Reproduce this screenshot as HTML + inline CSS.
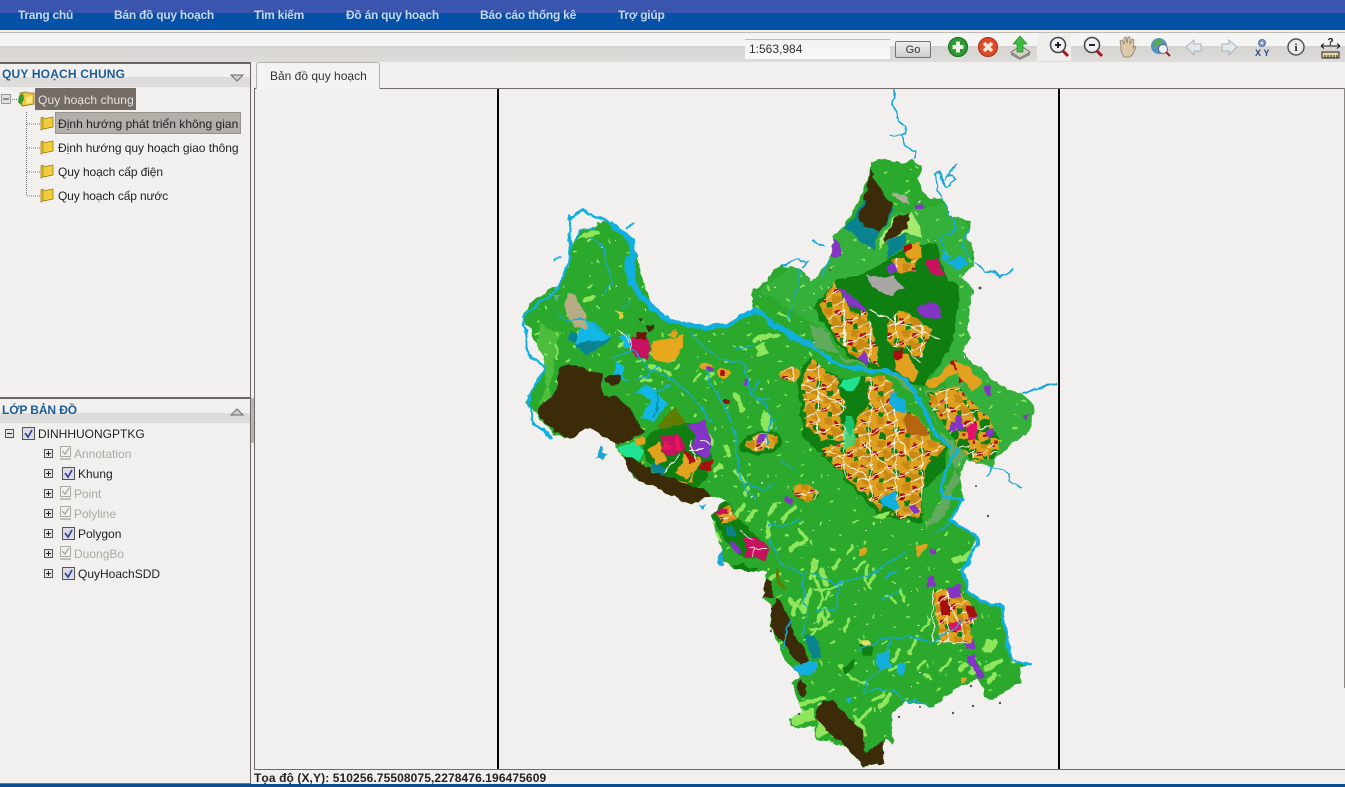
<!DOCTYPE html>
<html lang="vi"><head><meta charset="utf-8"><title>Bản đồ quy hoạch</title>
<style>
html,body{margin:0;padding:0;width:1345px;height:787px;overflow:hidden;background:#f1f0ee;font-family:"Liberation Sans",sans-serif}
.a{position:absolute;white-space:nowrap}
.r{position:absolute}
.nav{top:8px;color:#c9d6ea;font-size:12px;font-weight:bold;letter-spacing:-.25px;line-height:14px}
.t{font-size:12px;line-height:14px;color:#222;letter-spacing:.03px}
.l{font-size:12px;line-height:14px;color:#222}
.g{color:#aaa9a0}
.h{font-size:12px;font-weight:bold;color:#1c5c98;letter-spacing:.18px;line-height:14px}
svg{position:absolute;left:0;top:0}
</style></head><body>
<div class="r" style="left:0;top:0;width:1345px;height:13px;background:#3a55ae"></div>
<div class="r" style="left:0;top:13px;width:1345px;height:17px;background:#0551a8"></div>
<div class="r" style="left:0;top:32px;width:1345px;height:1px;background:#bdbcb9"></div>
<div class="r" style="left:0;top:33px;width:1345px;height:13px;background:#f4f4f2"></div>
<div class="r" style="left:0;top:46px;width:1345px;height:16px;background:linear-gradient(#d6d4d1,#dedcd9)"></div>
<div class="r" style="left:1037px;top:33px;width:34px;height:28px;background:#efeeec"></div>
<div class="a nav" style="left:18px">Trang chủ</div>
<div class="a nav" style="left:114px">Bản đồ quy hoạch</div>
<div class="a nav" style="left:254px">Tìm kiếm</div>
<div class="a nav" style="left:346px">Đồ án quy hoạch</div>
<div class="a nav" style="left:480px">Báo cáo thống kê</div>
<div class="a nav" style="left:618px">Trợ giúp</div>

<div class="r" style="left:745px;top:39px;width:145px;height:20px;background:linear-gradient(#f3f2f0,#faf9f8);border-top:1px solid #bbb;box-sizing:border-box"></div>
<div class="a" style="left:749px;top:42px;font-size:12px;line-height:15px;color:#333">1:563,984</div>
<div class="r" style="left:895px;top:41px;width:36px;height:17px;box-sizing:border-box;border:1px solid #77746f;border-radius:2px;background:linear-gradient(#f0efed,#cfcdca);font-size:11px;line-height:16px;text-align:center;color:#333">Go</div>

<!-- panels -->
<div class="r" style="left:0;top:62px;width:250px;height:2px;background:#6c6663"></div>
<div class="r" style="left:250px;top:62px;width:1px;height:722px;background:#6c6663"></div>
<div class="r" style="left:0;top:77px;width:250px;height:10px;background:#dedcda"></div>
<div class="a h" style="left:2px;top:67px">QUY HOẠCH CHUNG</div>
<div class="r" style="left:0;top:397px;width:250px;height:2px;background:#6c6663"></div>
<div class="r" style="left:0;top:413px;width:250px;height:10px;background:#dedcda"></div>
<div class="a h" style="left:2px;top:403px;letter-spacing:-.1px">LỚP BẢN ĐỒ</div>
<div class="r" style="left:251px;top:398px;width:3px;height:45px;background:#b9b7b4"></div>
<div class="r" style="left:0;top:783px;width:250px;height:1px;background:#77736f"></div>

<div class="r" style="left:35px;top:88px;width:101px;height:22px;background:#756c67"></div>
<div class="r" style="left:55px;top:112px;width:186px;height:22px;box-sizing:border-box;border:1px solid #98928d;background:#b3aeaa"></div>
<div class="a t" style="left:38px;top:93px;color:#e6e3df;letter-spacing:.12px">Quy hoạch chung</div>
<div class="a t" style="left:58px;top:117px">Định hướng phát triển không gian</div>
<div class="a t" style="left:58px;top:141px;letter-spacing:-.05px">Định hướng quy hoạch giao thông</div>
<div class="a t" style="left:58px;top:165px;letter-spacing:-.1px">Quy hoạch cấp điện</div>
<div class="a t" style="left:58px;top:189px;letter-spacing:-.15px">Quy hoạch cấp nước</div>

<div class="a l" style="left:38px;top:427px">DINHHUONGPTKG</div>
<div class="a l g" style="left:74px;top:447px">Annotation</div>
<div class="a l" style="left:78px;top:467px">Khung</div>
<div class="a l g" style="left:74px;top:487px">Point</div>
<div class="a l g" style="left:74px;top:507px">Polyline</div>
<div class="a l" style="left:78px;top:527px">Polygon</div>
<div class="a l g" style="left:74px;top:547px">DuongBo</div>
<div class="a l" style="left:78px;top:567px">QuyHoachSDD</div>

<!-- tab -->
<div class="r" style="left:256px;top:62px;width:124px;height:27px;box-sizing:border-box;border:1px solid #b5b2ae;border-bottom:none;border-radius:3px 3px 0 0;background:#f4f3f1;z-index:2"></div>
<div class="a" style="left:270px;top:69px;font-size:12px;line-height:14px;color:#333;z-index:3">Bản đồ quy hoạch</div>

<svg width="1345" height="787" viewBox="0 0 1345 787" xmlns="http://www.w3.org/2000/svg">
<defs>
<filter id="rough" filterUnits="userSpaceOnUse" x="500" y="88" width="558" height="681" color-interpolation-filters="sRGB">
<feTurbulence type="fractalNoise" baseFrequency="0.09" numOctaves="3" seed="7" result="n"/>
<feDisplacementMap in="SourceGraphic" in2="n" scale="7" xChannelSelector="R" yChannelSelector="G"/>
</filter>
<pattern id="tick" width="53" height="47" patternUnits="userSpaceOnUse">
<path d="M5 6l4-2M26 4l1 4M44 17l3 1M15 24l2 3M35 33l4-2M6 41l2-1" stroke="#8fe65c" stroke-width="1.6" fill="none"/>
<path d="M18 13h2M33 5h1M9 28h1" stroke="#f4f4f0" stroke-width="1"/>
</pattern>
<pattern id="city" width="26" height="22" patternUnits="userSpaceOnUse">
<rect width="26" height="22" fill="#dea01e"/>
<path d="M0 17L12 22V14L0 9zM18 0h8v7h-6z" fill="#c98914"/>
<path d="M3 3h5v4H3zM15 11h5v5h-5z" fill="#a81010"/>
<path d="M9 8h5v5H9zM21 16h5v5h-5z" fill="#0f7f12"/>
<path d="M0 8L14 2M12 0v22M0 20L26 10" stroke="#f3f0df" stroke-width="1" fill="none"/>
</pattern>
<pattern id="city2" width="22" height="20" patternUnits="userSpaceOnUse">
<rect width="22" height="20" fill="#0f7f12"/>
<path d="M0 0h12v9H0zM11 11h11v9H11z" fill="#e0a020"/>
<path d="M4 2h4v3H4zM15 13h4v3h-4z" fill="#a81010"/>
<path d="M0 14L22 5" stroke="#f3f0df" stroke-width="1"/>
</pattern>
<clipPath id="land"><path d="M872 162L880 158 893 160 903 164 913 160 922 165 918 177 922 190 928 198 943 200 952 215 962 217 972 223 967 237 975 257 973 267 962 277 973 290 967 327 970 337 963 353 990 377 1007 390 1023 392 1035 410 1028 433 1012 443 997 457 993 467 967 460 958 477 963 500 950 520 977 537 973 550 963 570 967 590 980 602 1002 607 1005 633 1013 663 1030 662 1020 668 1020 682 993 700 983 697 983 690 977 680 953 690 933 707 907 702 893 713 892 727 893 742 885 740 882 763 862 767 847 747 817 740 815 727 790 727 790 718 803 713 797 697 792 682 800 677 785 660 772 627 772 607 763 597 765 578 772 565 768 573 733 570 723 560 712 513 727 500 713 495 690 505 657 487 633 477 622 457 617 447 592 428 570 438 553 435 538 417 528 403 530 393 545 367 543 357 530 330 522 317 530 303 560 283 570 260 571 243 580 232 592 227 598 222 613 223 633 240 637 260 650 303 667 320 700 328 727 325 753 310 752 290 767 282 773 268 793 267 805 272 812 282 822 270 830 258 835 233 843 227 853 210 868 180z"/></clipPath>
</defs>

<!-- map frame -->
<rect x="254" y="88" width="1091" height="681" fill="#f1f0ee"/>
<path d="M254.5 769V88.5H1345M254 769.5H1345" fill="none" stroke="#6f6a67"/>
<path d="M1344.5 88V688" stroke="#8a8683"/>

<g filter="url(#rough)">
<!-- streams outside land -->
<g fill="none" stroke="#1ba6d6" stroke-width="1.6">
<path d="M895 90L894 98 891 104 897 112 899 122 905 124 906 132 901 136 889 135M901 136L905 145 911 149 916 151 916 160"/>
<path d="M956 165L950 172 946 178 952 175 956 180 946 187 940 172 936 175 938 190 942 200"/>
<path d="M975 262L985 270 994 272 1000 277 1009 274 1013 268"/>
<path d="M813 240L818 244 825 246M780 268L795 260 808 262 802 267"/>
<path d="M1024 392L1040 388 1058 384" stroke-width="2"/>
<path d="M985 462L992 468 1003 470 1012 482 1022 488M992 468L987 476"/>
</g>
<g fill="#1ba6d6"><path d="M601 445l4 3-3 6 5 1-4 6-5-4-3 2 3-6zM698 505l7 0-3 5zM722 546l3 8-3 12-4-3 2-10z"/></g>

<!-- land -->
<rect x="500" y="150" width="558" height="630" fill="#2aa92c" clip-path="url(#land)"/>
<g clip-path="url(#land)">
<path d="M835 225L960 200 980 290 965 350 1040 400 1030 440 990 470 960 470 945 380 840 340 760 290 800 260z" fill="#35b03a"/>
<rect x="520" y="150" width="520" height="620" fill="url(#tick)"/>

<!-- pale green patches -->
<g fill="none" stroke="#8fe65c" stroke-linecap="round">
<path d="M810 590L803 610M815 560l-4 18M820 570l6 14M770 580l8 -6" stroke-width="5"/>
<path d="M790 600l10 8M800 600l-8 14M817 622l6 -12M822 612l4 12M840 560l-6 8" stroke-width="4"/>
<path d="M815 575l8 25-5 8M815 590q18 0 26-6M847 555l6-8M857 570l8-10" stroke-width="2.500"/>
<path d="M810 630l22-8M826 600l3-8M827 622q5-8 -2-14M815 628l-5 14" stroke-width="2.500"/>
<path d="M868 565l-3 14 6 8M870 585l5-10M890 596l6 6M900 590l4 10" stroke-width="3"/>
<path d="M880 660l8-8M900 650l-6 10M915 640l-5 14M930 620l-8 10M925 660l-8 8M890 670l12-6M930 680l-6-6M950 660l-8 10" stroke-width="3"/>
<path d="M840 665l14 14 14 5M860 640l5 8M848 620l-3 12" stroke-width="2.500"/>
<path d="M985 650l5-10M995 640l-6 10M985 670l15-8M990 680l4-6M975 660l-4 12M960 670l6-6" stroke-width="5"/>
<path d="M790 685l10 24M800 705l25 -8M820 705l5 14M870 710l-14 14M865 735l-10-18M890 695l-10 12M873 700l10-6" stroke-width="4"/>
<path d="M985 525l8 14M955 560l15-4M975 552l-8 6" stroke-width="6"/>
<path d="M585 300l8-3M710 375l-3 4M755 340l16-5M770 335l8 2" stroke-width="5"/>
<path d="M735 395l8 14M650 365l10 5M620 345l10-3M575 335l12 -5M570 380l-4-5M705 430l8 14M725 445l4 10M735 470l8 10M745 505l-8 10M755 510l-8 10M745 495l4-8M715 470l6-4M775 505l-5 10M782 520l12 -12M800 530l5 10M790 550l12 -8M770 525l-3 12" stroke-width="4.500"/>
<path d="M555 345l3 12M600 345l-12 -8M565 398l8 6M665 370l5 5M635 362l10-2M650 380l-10 -3M675 370l4 -5M695 380l4-6M740 345l6 5M790 320l-10 -5" stroke-width="2.500"/>
</g>
<path d="M540 322l-3 22 10 40-7 18 8 14 12 12-10-40 10-55z" fill="#8fe65c" opacity=".35"/>
<path d="M576 240l18-12 8 6-14 4z" fill="#8fe65c"/>
<path d="M762 410l7 3 3 15-7 6-4-10zM748 400l8-4M755 348l10-5 3 10-8 3z" fill="#8fe65c"/>
<path d="M770 720l-5-5M792 712l22-4 0 12-22 6zM816 718l16 14-14 6z" fill="#8fe65c"/>

<!-- teal/cyan west -->
<path d="M587 322L613 337 597 350 587 355 575 343 577 335z" fill="#12b7e6"/>
<path d="M588 342L613 338 597 350 587 355 575 345z" fill="#0a8390"/>
<path d="M571 330l6 3-2 10-7-4z" fill="#0a8390"/>
<path d="M647 383L667 403 653 423 642 417 650 400 635 392z" fill="#12b7e6"/>
<path d="M656 392l3 14-6 12" stroke="#0b8ea5" fill="none" stroke-width="1.5"/>
<path d="M617 360l8 8-3 8 10 5-18-6zM620 337l6 12 6-3-6-13z" fill="#12b7e6"/>
<path d="M657 427L675 407 685 423 665 430z" fill="#5f7d00"/>
<path d="M574 295l12 20 1 14-12-2-9-15 0-18z" fill="#b7ad84"/>
<path d="M553 295l8 0-5 6z" fill="#5fae8c"/>

<!-- West city -->
<path d="M653 430L687 423 707 423 712 453 707 477 697 487 677 487 647 463 643 443z" fill="#0f7f12"/>
<path d="M687 426L707 420 712 453 707 458 690 450 695 435z" fill="#8535c6"/>
<path d="M660 438l18-4 10 16-22 6z" fill="#c6125f"/>
<path d="M660 450l5-8 8 6zM672 440l4 -4 8 14-6 2z" fill="#e7165f"/>
<path d="M648 450l12-8 7 20-10 3zM686 455l14 2-3 14-10 8-12 -6zM665 480l18 6 10 3 -6-5 10-14-4 12z" fill="#e2a11e"/>
<path d="M700 462l12-2-2 12-10 0z" fill="#a81010"/>
<path d="M685 450l12 8-8 5z" fill="#a81010"/>
<path d="M680 455l-18 18M690 440l5 20M700 440l10 5M690 450l15 0" stroke="#f0f0e0" fill="none"/>
<path d="M653 462l12 6-4 8-12-8z" fill="#0a8390"/>
<!-- mint -->
<path d="M617 447L633 442 645 450 640 462 623 455z" fill="#1fe391"/>
<path d="M633 440l10-4 3 8-10 2z" fill="#e2a11e"/>

<!-- SW cluster -->
<path d="M712 513L727 500 737 517 768 547 767 560 740 557 727 543z" fill="#0f7f12"/>
<path d="M715 512l14-6 8 12-14 6z" fill="url(#city)"/>
<path d="M713 512l10-4 4 5-8 2z" fill="#c6125f"/>
<path d="M745 538l10-2 13 10-1 14-22-4z" fill="#c6125f"/>
<path d="M728 540l8 3 6 13-10-4z" fill="#8535c6"/>
<path d="M726 525l7 0 2 12-8-2z" fill="#0a8390"/>
<path d="M710 520l6 10 8 12-12-4z" fill="#8fe65c"/>
<path d="M733 565l12-2 0 8-12 2zM758 568l-5 7-12-2 3-8z" fill="#0f7f12"/>
<path d="M748 548l18 0M750 557l6-9M738 530l14 10" stroke="#f0f0e0" fill="none"/>

<!-- small town clusters -->
<ellipse cx="761" cy="443" rx="22" ry="11" transform="rotate(-14 761 443)" fill="#0f7f12"/>
<ellipse cx="762" cy="442" rx="17" ry="8" transform="rotate(-14 762 442)" fill="url(#city)"/>
<path d="M758 436l10-2-3 8-8 1z" fill="#8535c6"/>
<ellipse cx="806" cy="493" rx="14" ry="8" transform="rotate(20 806 493)" fill="url(#city)"/>
<path d="M786 496l7 4-2 4-7-4z" fill="#8535c6"/>
<ellipse cx="790" cy="374" rx="9" ry="7" fill="url(#city)"/>
<ellipse cx="723" cy="373" rx="8" ry="5" fill="#e2a11e"/>
<path d="M720 370l5 0 0 6-5 0z" fill="#a81010"/>
<ellipse cx="706" cy="367" rx="7" ry="3" fill="#e2a11e"/>
<path d="M707 367l5 0 0 4-5 0zM744 380l4 0 0 6-4 0z" fill="#8535c6"/>
<ellipse cx="726" cy="402" rx="3.5" ry="3" fill="#8b1010"/>
<path d="M672 329l6 3-2 5-6-2z" fill="#e2a11e"/>
<path d="M652 340l32-4 1 10-10 14-8 3-14-6z" fill="#e8a81e"/>
<path d="M632 337l14 0 6 12-3 10-14-3-6-12z" fill="#c6125f"/>
<path d="M637 332h9v8h-9z" fill="#6b1606"/>
<path d="M637 318l6 0-4 4zM646 326l8-2 1 5-8 2z" fill="#3a2a08"/>
<path d="M618 330q8 5 10 14M628 335l4 16" stroke="#f0f0e0" fill="none"/>
<path d="M615 311l4 0 3 8-4 0z" fill="#e2d040"/>

<!-- teal north / south (below the brown) -->
<g fill="#0a8390">
<path d="M843 227L858 215 866 228 880 232 885 203 893 210 888 222 880 233 872 250 858 237z"/>
<path d="M887 243L893 237 908 233 903 247 887 260z"/>
<path d="M805 635l10 0 6 12 0 12-8 0-8-18z"/>
</g>
<path d="M877 250L893 217 913 212 922 237 908 233 893 237 885 243z" fill="#a6ea70"/>
<!-- dark brown -->
<g fill="#3b2b08">
<path d="M558 368L570 363 587 370 603 373 602 397 617 397 630 410 645 432 623 443 600 445 592 428 570 438 553 432 538 415 543 403 557 390 557 377z"/>
<path d="M605 378l8-3 8 2-3 6-8 2-5-3z"/>
<path d="M622 457L633 458 653 472 670 478 700 488 717 497 695 505 680 505 657 490 640 485 628 468z"/>
<path d="M765 578L772 583 773 597 763 597z"/>
<path d="M777 597L795 632 803 647 810 660 805 668 790 653 773 630 772 607z"/>
<path d="M823 700L833 700 862 733 867 752 885 740 882 763 862 767 847 747 827 733 815 717z"/>
<path d="M871 170L875 180 883 193 892 207 888 220 880 232 865 228 858 217 863 197 868 187z"/>
<path d="M895 217L910 212 908 230 893 237 885 243 887 232z"/>
<path d="M800 680l7 12-5 5-6-10z"/>
</g>
<path d="M792 668l18-8 8 3-4 10-14 3z" fill="#13aede"/>
<path d="M864 200l-4 8-4 8" stroke="#0a8390" stroke-width="2.500" fill="none"/>
<path d="M892 192l13 2 5 10-8-2-10-6z" fill="#a9ad99"/>
<path d="M827 255l6-15 5 3 2 15z" fill="#8535c6"/>
<path d="M915 205l8-2 3 4-8 3z" fill="#8535c6"/>

<!-- N city band -->
<path d="M813 307L837 280 863 273 947 280 960 287 953 343 923 387 880 370 850 360 820 320z" fill="#0f7f12"/>
<path d="M905 247L937 243 947 280 863 274 885 262z" fill="#0f7f12"/>
<path d="M906 246l14 -4 2 16-14 6z" fill="#e2a11e"/>
<path d="M904 245l7-2 1 7-7 2z" fill="#a81010"/>
<path d="M925 262l14-4 6 18-14 -2z" fill="#c6125f"/>
<path d="M885 268l10-6 4 10-10 3z" fill="#8535c6"/>
<path d="M892 260l22-2 2 12-18 4z" fill="url(#city)"/>
<path d="M867 275L893 277 904 287 893 295 873 288z" fill="#a9a7a4"/>
<path d="M840 288l28 20 -4 5-28-18z" fill="#8535c6"/>
<path d="M820 305l14-22 22 32 10 22 6 24-24-8-18-26z" fill="url(#city)"/>
<path d="M860 310l8 4 8 30 3 22-24-8 -2-16z" fill="url(#city)"/>
<path d="M856 360l8-10 6 10-3 6z" fill="#8535c6"/>
<path d="M886 325l14-15 32 18-10 30-18-8-14-5z" fill="url(#city)"/>
<path d="M918 307l12-5 10 4 0 14-22-4z" fill="#8535c6"/>
<path d="M895 355l12 0 12 18-6 8-16-10z" fill="#e2a11e"/>
<path d="M894 351l8 0 0 7-8 0z" fill="#a81010"/>
<path d="M924 385l32-25 4 10-30 20z" fill="#e2a11e"/>
<path d="M951 362l8-3-4 12zM960 373l14-2-6 10-10 2z" fill="#a81010"/>
<path d="M845 310v36M870 325l2 30M905 345l14 18M870 310l70 30" stroke="#f3f0df" fill="none"/>
<path d="M955 360l16 8 12 16-10 6-16-14z" fill="#e2a11e"/>

<!-- river bank grey-green -->
<path d="M810 325L822 328 843 360 880 372 815 345z" fill="#62ab5e"/>
<path d="M886 372L907 378 940 430 965 455 940 500 925 530 945 515 958 478 947 445 935 420 920 400z" fill="#62ab5e"/>
<path d="M925 392l40-8-25 18 2 18-10-14z" fill="#62ab5e"/>

<!-- central city -->
<path d="M797 380L810 357 840 380 867 375 897 395 923 460 947 447 945 470 923 490 923 523 880 517 837 470 803 437z" fill="#0f7f12"/>
<path d="M802 385L812 358 840 382 838 395 850 405 840 415 850 440 822 440 805 425z" fill="url(#city)"/>
<path d="M865 376L885 376 895 395 903 408 920 420 932 440 945 447 925 470 923 488 900 495 920 510 905 520 885 515 860 490 838 470 820 450 848 440 858 420 870 400z" fill="url(#city)"/>
<path d="M838 452l24 -10 10 34 6 16 -24 -8z" fill="url(#city)"/>
<path d="M898 488l25-6-2 35-15 1z" fill="url(#city)"/>
<path d="M850 380l14-4-4 28-12 5-6-14z" fill="#0f7f12"/>
<path d="M845 380l15-4-6 14-14-2z" fill="#1fe391"/>
<path d="M845 418l8-2 2 30-12 4z" fill="#1fe391" opacity=".7"/>
<path d="M890 395l6 -3 8 8 3 10-6 4-11-8z" fill="#13aede"/>
<path d="M905 412l15 8 8 16-22-2z" fill="#b5660f"/>
<path d="M880 500l14 -8 5 14-12 10z" fill="#13aede"/>
<path d="M885 505l-6 8 8 4 8-4z" fill="#0f7f12"/>
<path d="M910 505l6 -2 3 10-6 2z" fill="#8535c6"/>
<path d="M802 400h22M806 385l40 22M860 440l40 40M880 400l30 60M830 450l40 30" stroke="#f3f0df" fill="none"/>
<path d="M870 515l20 -3-4 8z" fill="#8fe65c"/>

<!-- east city -->
<path d="M928 395L955 385 990 420 1000 440 995 458 975 462 960 450 945 425 932 410z" fill="url(#city2)"/>
<path d="M930 395l22-8 24 32 -14 10-14-8-18-22z" fill="url(#city)"/>
<path d="M968 425h8v16h-8z" fill="#e3106a"/>
<path d="M955 415l7 1 3 12-8 3z" fill="#8535c6"/>
<path d="M950 422l8 2-3 8-6-2z" fill="#8535c6"/>
<path d="M985 430l8-2 2 8-6 4z" fill="#8535c6"/>
<path d="M985 388l5-3 2 10-5 1zM1024 415l6-2-4 7z" fill="#8535c6"/>
<path d="M975 440l20 6-8 14-14-2z" fill="url(#city)"/>
<path d="M992 470l8-6 -2 10z" fill="#1fe391"/>

<!-- south city -->
<path d="M933 590L960 590 977 617 967 643 940 643z" fill="url(#city)"/>
<path d="M948 587l11-2 3 12-12 1z" fill="#8535c6"/>
<path d="M970 607l7 10-5 4-6-10zM930 548l5 0 0 6-5 0zM927 577l7-1 2 9-8 2z" fill="#8535c6"/>
<path d="M941 600l10 0 0 15-10 0z" fill="#a81010"/>
<path d="M950 622l10 0 0 8-10 0z" fill="#e3106a"/>
<path d="M965 606l8-2 3 12-7 2z" fill="#a81010"/>
<path d="M965 640l7-2 4 8-11 3z" fill="#8535c6"/>
<path d="M966 655l7-2 11 25-5 2z" fill="#8535c6"/>
<path d="M933 590v50l18 4 18-2M945 590l20 50" stroke="#f3f0df" fill="none"/>
<path d="M930 635l25 10 -10 -4z" fill="#0f7f12"/>
<path d="M967 630l6 4-2 8-6-2zM960 676l7 2-5 6z" fill="#e2a11e"/>
<path d="M917 545l10 0-3 8-8 3z" fill="#e2a11e"/>
<path d="M860 645l8-4 5 6-3 10-6-2z" fill="#0f7f12"/>
<path d="M862 640l6-1 2 7-4 2z" fill="#e8e060"/>
<path d="M843 668l8-6 4-4-2 12-7 3z" fill="#0f7f12"/>
<path d="M858 548l5-2 4 2 -2 6-5 1z" fill="#e2a11e"/>
<path d="M775 565l7 18 2 8-5-5-5-15z" fill="#5f7d00"/>

<!-- streams inside land -->
<g fill="none" stroke="#17a9d3" stroke-width="1.400">
<path d="M590 238l12 8 6 18 4 20-8 8M630 300l-8 8M555 310l8 10 20-2 20 12"/>
<path d="M690 332l15 15 15 12 25 5 4 30 15 8 12 25M735 350l20 -5M760 380l-10 15 20 5"/>
<path d="M610 358l25-8 14 20 18 6 20 14 15 20 10 12M660 365l-12 10-10 5M670 385l-16 8"/>
<path d="M705 370l15 30 10 20 6 20 2 30 8 20 10 10M745 480l16 10 15-4M770 420l-3 25M780 460l15 10"/>
<path d="M800 520l-15 5-15 0M770 540l12 25 20 10 5 40-5 20M790 620l-8 30"/>
<path d="M805 570l30 14 40-10 12 -12 18 -8M880 600l20 -10M860 650l20-10 30 -3 22 5 30 -20M890 640l-6 25 -15 15 -5 12M840 580l-5 30 -20 0"/>
<path d="M905 700l-10 -8-15 -4-15 5M930 705l-25 -5M975 545l-10 30M900 570l-15 8M950 525l-15 8"/>
<path d="M970 225l-8 20 10 15M955 230l-15 10 8 20M945 205l10 15-5 15"/>
<path d="M800 270l-5 30-8 22M830 258l-8 18"/>
</g>
<g fill="#13aede"><path d="M875 655l14-4 4 16-14 3zM898 662l10 2-3 12-8-2zM845 700l8-2-3 7z"/><path d="M960 255l8 8-8 8-14-8zM940 250l12 4-6 8z"/></g>
</g>

<!-- main rivers -->
<g fill="none" stroke="#11afe0" stroke-linejoin="round" stroke-linecap="round">
<path d="M569 215L570 260 556 291 530 310 523 318 531 360 545 367 530 395 531 420 552 438" stroke-width="2.500"/>
<path d="M569 220l12-10 30 14 22 18" stroke-width="2.500"/>
<path d="M575 240l5-8 14-6" stroke-width="1.800"/>
<path d="M627 228l6 -5M560 258l-7 3" stroke-width="1.800"/>
<path d="M612 224L632 240 633 262 630 280 640 295 651 306 668 320 700 328 728 325 755 310 775 324 790 337 812 345" stroke-width="5"/>
<path d="M812 345L825 355 845 367 868 370 887 370 907 380 920 400 933 430 950 447" stroke-width="4"/>
<path d="M957 450L950 462 940 487 943 496 963 500 950 520 975 535 978 545 963 570 968 590 982 602 1002 607" stroke-width="3"/>
<path d="M1002 607L1006 633 1012 660 1030 663" stroke-width="3"/>
<path d="M800 340l-15-10" stroke-width="6"/>
<path d="M630 262l1 18" stroke-width="11"/>
</g>
</g>
<rect x="497" y="89" width="2" height="680" fill="#000"/>
<rect x="1058" y="89" width="2" height="680" fill="#000"/>
<g fill="#555"><circle cx="980" cy="288" r="1.500"/><circle cx="976" cy="486" r="1"/><circle cx="988" cy="516" r="1.200"/><circle cx="971" cy="686" r="1.200"/><circle cx="973" cy="706" r="1.200"/><circle cx="953" cy="713" r="1.200"/><circle cx="899" cy="717" r="1.200"/><circle cx="920" cy="707" r="1"/><circle cx="830" cy="270" r="1.200"/><circle cx="1000" cy="703" r="1.200"/><circle cx="799" cy="714" r="1.200"/><circle cx="771" cy="631" r="1.200"/></g>

<!-- tree connectors -->
<g fill="none" stroke="#777" stroke-dasharray="1 1">
<path d="M26.500 112V196M27 124h13M27 148h13M27 172h13M27 196h13M12 99.500h6"/>
</g>
<!-- tree minus -->
<rect x="1.500" y="94.500" width="9" height="9" fill="#e2e0dc" stroke="#9a9894"/><path d="M3 99h6" stroke="#333"/>
<!-- root folder -->
<path d="M20 93l6-1 2 1 6 0 0 11-12 2z" fill="#eac73c" stroke="#8a7410" stroke-width=".8"/><path d="M19 96l4-3 1 6-3 6-3-3z" fill="#3a9b2c"/><path d="M26 97l6-1v7l-6 1z" fill="#fbe67c"/>
<!-- folders -->
<g stroke="#9b7d10" stroke-width=".8">
<path d="M41 118l2-1v12l-2 1z M43 119l10-2v10l-10 2z" fill="#f0cd3a"/>
<path d="M41 142l2-1v12l-2 1z M43 143l10-2v10l-10 2z" fill="#f0cd3a"/>
<path d="M41 166l2-1v12l-2 1z M43 167l10-2v10l-10 2z" fill="#f0cd3a"/>
<path d="M41 190l2-1v12l-2 1z M43 191l10-2v10l-10 2z" fill="#f0cd3a"/>
</g>
<!-- panel arrows -->
<path d="M231 75h12l-6 6z" fill="#cfcdca" stroke="#6f6c68"/>
<path d="M231 415h12l-6-6z" fill="#cfcdca" stroke="#6f6c68"/>

<!-- layer tree controls -->
<g fill="#e6e4e0" stroke="#555">
<rect x="5.500" y="429.500" width="8" height="8"/>
<rect x="44.500" y="449.500" width="8" height="8"/><rect x="44.500" y="469.500" width="8" height="8"/><rect x="44.500" y="489.500" width="8" height="8"/><rect x="44.500" y="509.500" width="8" height="8"/><rect x="44.500" y="529.500" width="8" height="8"/><rect x="44.500" y="549.500" width="8" height="8"/><rect x="44.500" y="569.500" width="8" height="8"/>
</g>
<path d="M7 433.500h5M46 453.500h5M48.500 451v5M46 473.500h5M48.500 471v5M46 493.500h5M48.500 491v5M46 513.500h5M48.500 511v5M46 533.500h5M48.500 531v5M46 553.500h5M48.500 551v5M46 573.500h5M48.500 571v5" stroke="#222"/>
<g fill="#dcdbe4" stroke="#555">
<rect x="22.500" y="427.500" width="12" height="12"/><rect x="62.500" y="467.500" width="12" height="12"/><rect x="62.500" y="527.500" width="12" height="12"/><rect x="62.500" y="567.500" width="12" height="12"/>
</g>
<path d="M25 433l3 4 4-7M65 473l3 4 4-7M65 533l3 4 4-7M65 573l3 4 4-7" fill="none" stroke="#2a3f9a" stroke-width="1.600"/>
<g fill="#f1f0ee" stroke="#aaa9a0">
<rect x="60.500" y="446.500" width="10" height="10"/><rect x="60.500" y="486.500" width="10" height="10"/><rect x="60.500" y="506.500" width="10" height="10"/><rect x="60.500" y="546.500" width="10" height="10"/>
</g>
<path d="M62 451l3 3 4-6M62 491l3 3 4-6M62 511l3 3 4-6M62 551l3 3 4-6M60 459h11M60 499h11M60 519h11M60 559h11" fill="none" stroke="#a3a298" stroke-width="1.200"/>

<!-- toolbar icons -->
<circle cx="958" cy="47" r="9.500" fill="#2d9a35" stroke="#16681e"/><path d="M958 41.500v11M952.500 47h11" stroke="#e8f3e4" stroke-width="4"/>
<circle cx="988" cy="47" r="9.500" fill="#df4a28" stroke="#a8301a"/><path d="M984 43l8 8M992 43l-8 8" stroke="#f7e6da" stroke-width="3.500"/>
<path d="M1011 52l10-6 9 6-10 6z" fill="#d5d3c8" stroke="#777"/><path d="M1011 52v3l9 5 10-5v-3l-10 6z" fill="#8e8c84"/><path d="M1020 36l7 8h-4v8h-6v-8h-4z" fill="#3fbb3e" stroke="#2a8a2a" stroke-width=".7"/>
<g><circle cx="1058" cy="45" r="7.500" fill="#f0f0f6" stroke="#444" stroke-width="1.500"/><path d="M1055 45h6M1058 42v6" stroke="#111" stroke-width="1.800"/><path d="M1063 51l5 5" stroke="#a81824" stroke-width="3"/></g>
<g><circle cx="1092" cy="45" r="7.500" fill="#f0f0f6" stroke="#444" stroke-width="1.500"/><path d="M1089 45h6" stroke="#111" stroke-width="1.800"/><path d="M1097 51l5 5" stroke="#a81824" stroke-width="3"/></g>
<path d="M1121 46l-1-5 2-1 2 4 0-6 2-1 1 6 1-6 2 0 0 7 2-5 2 1-1 8 2-2 1 1-3 7-3 3h-6l-3-6z" fill="#dcc9aa" stroke="#8a7c68" stroke-width=".8"/>
<circle cx="1159" cy="46" r="8" fill="#4f93c9"/><path d="M1153 43l5-5 5 2-3 5-4 0-1 5zM1160 50l5-3 2 2-3 5z" fill="#5ba85a"/><circle cx="1163" cy="49" r="4.500" fill="#eef3fa" stroke="#667"/><path d="M1166 52l4 4" stroke="#a81824" stroke-width="2"/>
<path d="M1186 47l8-7v4h7v7h-7v4z" fill="#e2e8ec" stroke="#a9b5bb"/>
<path d="M1237 47l-8-7v4h-7v7h7v4z" fill="#e2e8ec" stroke="#a9b5bb"/>
<circle cx="1262" cy="43" r="3.500" fill="#7a9cc8" stroke="#55719c"/><circle cx="1262" cy="43" r="1.300" fill="#dfe8f4"/>
<text x="1255" y="56" font-family="Liberation Sans" font-size="9" font-weight="bold" fill="#274c84" letter-spacing="2.500">XY</text>
<circle cx="1296" cy="47" r="8" fill="#ecebe7" stroke="#555" stroke-width="1.500"/><text x="1296" y="51" text-anchor="middle" font-family="Liberation Serif" font-size="11" font-weight="bold" fill="#222">i</text>
<path d="M1322 52h17v6h-17z" fill="#e9d9a8" stroke="#222"/><path d="M1325 55v3M1328 55v3M1331 55v3M1334 55v3M1337 55v3M1321 46h19M1321 46l3-2.500M1321 46l3 2.500M1340 46l-3-2.500M1340 46l-3 2.500" stroke="#111" fill="none"/>
<text x="1330.500" y="45" text-anchor="middle" font-family="Liberation Sans" font-size="10" font-weight="bold" fill="#111">?</text>
</svg>

<div class="a" style="left:254px;top:771px;font-size:12px;font-weight:bold;line-height:14px;color:#222;letter-spacing:.1px;z-index:5">Tọa độ (X,Y): 510256.75508075,2278476.196475609</div>
<div class="r" style="left:0;top:784px;width:1345px;height:3px;background:#0b4f92;z-index:5"></div>
</body></html>
